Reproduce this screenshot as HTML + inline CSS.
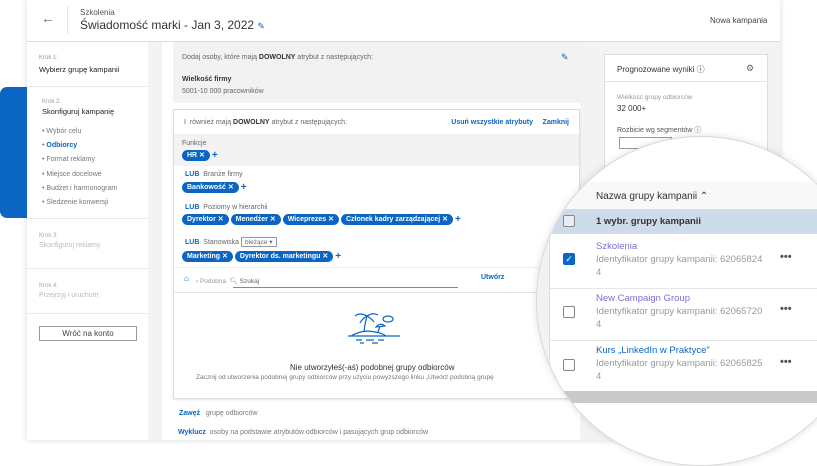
<!DOCTYPE html>
<html><head><meta charset="utf-8"><style>
*{box-sizing:border-box;margin:0;padding:0}
body{width:817px;height:460px;overflow:hidden;background:#fff;font-family:"Liberation Sans",sans-serif;color:#333;position:relative}
.abs{position:absolute}
.s{font-size:7px;color:#666}
.chips{display:flex;align-items:center;height:11px;white-space:nowrap}
.chip{display:inline-flex;align-items:center;background:#0a66c2;color:#fff;font-size:7px;font-weight:bold;border-radius:6px;padding:0 5px;margin-right:2px;height:11px;line-height:11px}
.plus{color:#0a66c2;font-weight:bold;font-size:10px;line-height:11px}
.lub{color:#0a66c2;font-weight:bold;font-size:7px}
.lnk{color:#0a66c2;font-weight:bold;font-size:7px}
.cb{position:absolute;width:12px;height:12px;border:1.2px solid #888;border-radius:2px;background:#fff}
</style></head><body>
<div class="abs" style="left:27px;top:0;width:753px;height:440px;background:#fff;box-shadow:0 0 6px rgba(0,0,0,.15)"></div>
<div class="abs" style="left:27px;top:0;width:753px;height:42px;border-bottom:1px solid #ddd;background:#fff"></div>
<div class="abs" style="left:41px;top:10px;font-size:14px;color:#666">←</div>
<div class="abs" style="left:67px;top:6px;width:1px;height:28px;background:#e5e5e5"></div>
<div class="abs" style="left:80px;top:8px;font-size:8px;color:#555">Szkolenia</div>
<div class="abs" style="left:80px;top:18px;font-size:12px;color:#333">Świadomość marki - Jan 3, 2022 <span style="color:#0a66c2;font-size:9px">✎</span></div>
<div class="abs" style="left:710px;top:16px;font-size:8px;color:#444">Nowa kampania</div>
<div class="abs" style="left:148px;top:42px;width:632px;height:398px;background:#f3f3f3"></div>
<div class="abs" style="left:0;top:87px;width:34px;height:131px;background:#0a66c2;border-radius:7px 0 0 7px"></div>
<div class="abs" style="left:27px;top:42px;width:121px;height:398px;background:#fff"></div>
<div class="abs" style="left:27px;top:86px;width:121px;height:1px;background:#e8e8e8"></div>
<div class="abs" style="left:27px;top:218px;width:121px;height:1px;background:#e8e8e8"></div>
<div class="abs" style="left:27px;top:268px;width:121px;height:1px;background:#e8e8e8"></div>
<div class="abs" style="left:27px;top:313px;width:121px;height:1px;background:#e8e8e8"></div>
<div class="abs" style="left:39px;top:55px;font-size:6px;color:#999">Krok 1:</div>
<div class="abs" style="left:39px;top:65px;font-size:7.5px;color:#222">Wybierz grupę kampanii</div>
<div class="abs" style="left:42px;top:99px;font-size:6px;color:#999">Krok 2:</div>
<div class="abs" style="left:42px;top:107px;font-size:7.5px;color:#222">Skonfiguruj kampanię</div>
<div class="abs" style="left:42px;top:125px;font-size:7px;color:#777;line-height:14.2px">• Wybór celu<br>• <b style="color:#0a66c2">Odbiorcy</b><br>• Format reklamy<br>• Miejsce docelowe<br>• Budżet i harmonogram<br>• Śledzenie konwersji</div>
<div class="abs" style="left:39px;top:233px;font-size:6px;color:#aaa">Krok 3:</div>
<div class="abs" style="left:39px;top:242px;font-size:7px;color:#bbb">Skonfiguruj reklamy</div>
<div class="abs" style="left:39px;top:283px;font-size:6px;color:#aaa">Krok 4:</div>
<div class="abs" style="left:39px;top:292px;font-size:7px;color:#bbb">Przejrzyj i uruchom</div>
<div class="abs" style="left:39px;top:326px;width:98px;height:15px;border:1px solid #999;font-size:8px;text-align:center;line-height:13px;color:#444">Wróć na konto</div>
<div class="abs" style="left:162px;top:42px;width:418px;height:398px;background:#fff"></div>
<div class="abs" style="left:173px;top:42px;width:407px;height:61px;background:#f2f2f2"></div>
<div class="abs s" style="left:182px;top:54px">Dodaj osoby, które mają <b style="color:#333">DOWOLNY</b> atrybut z następujących:</div>
<div class="abs" style="left:561px;top:52px;color:#0a66c2;font-size:9px">✎</div>
<div class="abs" style="left:182px;top:76px;font-size:7px;font-weight:bold;color:#333">Wielkość firmy</div>
<div class="abs s" style="left:182px;top:88px">5001-10 000 pracowników</div>
<div class="abs" style="left:173px;top:109px;width:407px;height:290px;border:1px solid #ddd;background:#fff;box-shadow:0 1px 2px rgba(0,0,0,.1)"></div>
<div class="abs s" style="left:184px;top:119px"><span style="color:#0a66c2">I</span>&nbsp; również mają <b style="color:#333">DOWOLNY</b> atrybut z następujących:</div>
<div class="abs lnk" style="right:284px;top:119px">Usuń wszystkie atrybuty</div>
<div class="abs lnk" style="right:248px;top:119px">Zamknij</div>
<div class="abs" style="left:174px;top:134px;width:405px;height:32px;background:#f3f3f3"></div>
<div class="abs s" style="left:182px;top:140px">Funkcje</div>
<div class="abs chips" style="left:182px;top:150px"><span class="chip">HR ✕</span><span class="plus">+</span></div>
<div class="abs s" style="left:185px;top:171px"><span class="lub">LUB</span>&nbsp; Branże firmy</div>
<div class="abs chips" style="left:182px;top:182px"><span class="chip">Bankowość ✕</span><span class="plus">+</span></div>
<div class="abs s" style="left:185px;top:204px"><span class="lub">LUB</span>&nbsp; Poziomy w hierarchii</div>
<div class="abs chips" style="left:182px;top:214px"><span class="chip">Dyrektor ✕</span><span class="chip">Menedżer ✕</span><span class="chip">Wiceprezes ✕</span><span class="chip">Członek kadry zarządzającej ✕</span><span class="plus">+</span></div>
<div class="abs s" style="left:185px;top:237px"><span class="lub">LUB</span>&nbsp; Stanowiska <span style="display:inline-block;border:1px solid #999;padding:0 3px;font-size:6.5px">bieżące ▾</span></div>
<div class="abs chips" style="left:182px;top:251px"><span class="chip">Marketing ✕</span><span class="chip">Dyrektor ds. marketingu ✕</span><span class="plus">+</span></div>
<div class="abs" style="left:174px;top:267px;width:405px;height:1px;background:#eee"></div>
<div class="abs" style="left:184px;top:274px;font-size:8px;color:#0a66c2">⌂</div>
<div class="abs" style="left:196px;top:277px;font-size:6.5px;color:#999">› Podobna &nbsp;🔍︎ <span style="color:#666">Szukaj</span></div>
<div class="abs" style="left:233px;top:287px;width:225px;height:1px;background:#6a8fb5"></div>
<div class="abs lnk" style="left:481px;top:274px">Utwórz</div>
<div class="abs" style="left:174px;top:292px;width:405px;height:1px;background:#e5e5e5"></div>
<svg class="abs" style="left:348px;top:310px" width="54" height="36" viewBox="0 0 54 36" fill="none" stroke="#0a66c2" stroke-width="1.2"><path d="M16 22 Q17 13 19 6 M19 6 Q12 2 7 6 M19 6 Q14 9 12 13 M19 6 Q25 2 30 5 M19 6 Q24 9 26 12"/><path d="M3 26 Q15 19 27 22 Q34 23 38 26"/><path d="M0 26 H52"/><path d="M8 30h6 M18 30h8 M30 30h6 M12 33h4 M24 33h6"/><path d="M28 17 Q32 12 37 16 Z M32 16 L30 22"/><ellipse cx="40" cy="9" rx="5" ry="3"/></svg>
<div class="abs" style="left:290px;top:363px;font-size:8px;color:#333">Nie utworzyłeś(-aś) podobnej grupy odbiorców</div>
<div class="abs" style="left:196px;top:374px;font-size:6.5px;color:#777;white-space:nowrap">Zacznij od utworzenia podobnej grupy odbiorców przy użyciu powyższego linku „Utwórz podobną grupę</div>
<div class="abs" style="left:179px;top:410px;font-size:7px;color:#777"><span class="lnk">Zawęź</span> &nbsp; grupę odbiorców</div>
<div class="abs" style="left:178px;top:429px;font-size:7px;color:#777"><span class="lnk">Wyklucz</span> &nbsp;osoby na podstawie atrybutów odbiorców i pasujących grup odbiorców</div>
<div class="abs" style="left:604px;top:54px;width:164px;height:280px;background:#fff;border:1px solid #ddd"></div>
<div class="abs" style="left:604px;top:81px;width:164px;height:1px;background:#e5e5e5"></div>
<div class="abs" style="left:617px;top:64px;font-size:8px;color:#333">Prognozowane wyniki ⓘ</div>
<div class="abs" style="left:746px;top:63px;font-size:9px;color:#666">⚙</div>
<div class="abs" style="left:617px;top:94px;font-size:6.5px;color:#999">Wielkość grupy odbiorców</div>
<div class="abs" style="left:617px;top:104px;font-size:8px;color:#333">32 000+</div>
<div class="abs" style="left:617px;top:125px;font-size:7px;color:#555">Rozbicie wg segmentów ⓘ</div>
<div class="abs" style="left:619px;top:137px;width:53px;height:12px;border:1px solid #999"></div>
<div class="abs" style="left:741px;top:161px;font-size:6px;color:#777">12%</div>
<div class="abs" style="left:536px;top:136px;width:330px;height:330px;border-radius:50%;overflow:hidden;background:#fff;border:1px solid #d8d8d8;box-shadow:0 0 8px rgba(0,0,0,.12)">
 <div class="abs" style="left:0;top:0;width:12px;height:330px;background:#f2f2f2"></div>
 <div class="abs" style="left:12px;top:0;width:1px;height:330px;background:#ddd"></div>
 <div class="abs" style="left:13px;top:45px;width:320px;height:27px;background:#f8f8f8"></div>
 <div class="abs" style="left:59px;top:54px;font-size:10px;color:#333">Nazwa grupy kampanii ⌃</div>
 <div class="abs" style="left:13px;top:72px;width:320px;height:25px;background:#cddbea"></div>
 <div class="cb" style="left:26px;top:78px;background:#e9eef4"></div>
 <div class="abs" style="left:59px;top:79px;font-size:9.5px;font-weight:bold;color:#333">1 wybr. grupy kampanii</div>
 <div class="abs" style="left:13px;top:151px;width:320px;height:1px;background:#e5e5e5"></div>
 <div class="abs" style="left:13px;top:203px;width:320px;height:1px;background:#e5e5e5"></div>
 <div class="cb" style="left:26px;top:116px;background:#0a66c2;border-color:#0a66c2;color:#fff;font-size:9px;line-height:10px;text-align:center">✓</div>
 <div class="cb" style="left:26px;top:169px"></div>
 <div class="cb" style="left:26px;top:222px"></div>
 <div class="abs" style="left:59px;top:103px;font-size:9.5px;color:#7b6fd6;line-height:13px">Szkolenia<br><span style="color:#999">Identyfikator grupy kampanii: 62065824<br>4</span></div>
 <div class="abs" style="left:59px;top:155px;font-size:9.5px;color:#7b6fd6;line-height:13px">New Campaign Group<br><span style="color:#999">Identyfikator grupy kampanii: 62065720<br>4</span></div>
 <div class="abs" style="left:59px;top:207px;font-size:9.5px;color:#0a66c2;line-height:13px">Kurs „LinkedIn w Praktyce"<br><span style="color:#999">Identyfikator grupy kampanii: 62065825<br>4</span></div>
 <div class="abs" style="left:243px;top:114px;font-size:11px;color:#555;font-weight:bold">•••</div>
 <div class="abs" style="left:243px;top:166px;font-size:11px;color:#555;font-weight:bold">•••</div>
 <div class="abs" style="left:243px;top:219px;font-size:11px;color:#555;font-weight:bold">•••</div>
 <div class="abs" style="left:13px;top:254px;width:320px;height:12px;background:#c9c9c9"></div>
 <div class="abs" style="left:13px;top:254px;width:13px;height:12px;background:#eee;font-size:7px;color:#888;text-align:center">‹</div>
</div>
</body></html>
